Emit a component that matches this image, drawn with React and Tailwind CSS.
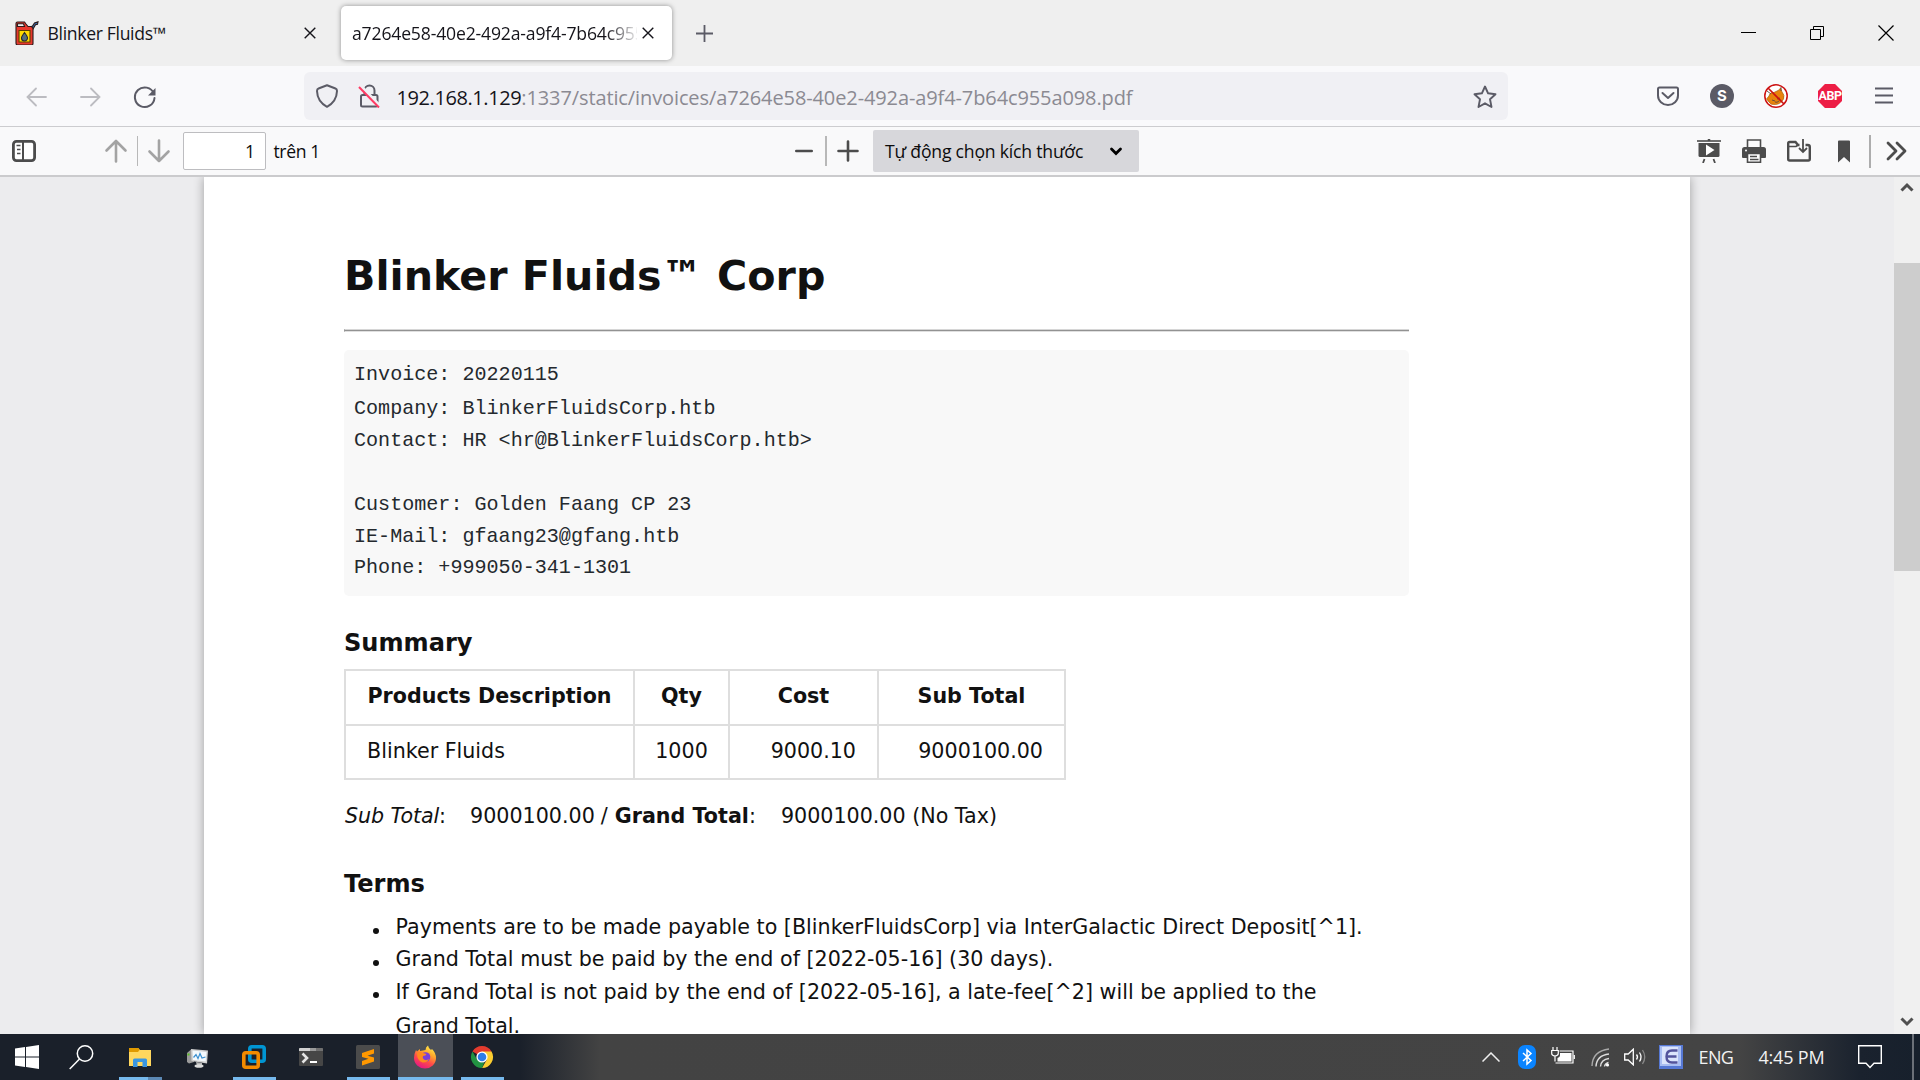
const ink = "#5b5b66";

function Svg({ w = 24, h = 24, className = "", children, sw = 2, stroke = ink, ...rest }) {
  return (
    <svg
      width={w}
      height={h}
      viewBox={`0 0 ${w} ${h}`}
      fill="none"
      stroke={stroke}
      strokeWidth={sw}
      className={`block shrink-0 ${className}`}
      {...rest}
    >
      {children}
    </svg>
  );
}

/* ---------- Tab strip ---------- */

function GasCan() {
  return (
    <Svg className="ml-[15px]" stroke="#2b1a1a" sw={1.1}>
      <path d="M14.500 6.500l3-1.500 2-3 3.500-1.200-.5 2.500-2 .5-2.500 4.200z" fill="#3467a8" />
      <path d="M1 2.500Q1 1 2.500 1h7l1.500 2 2 2.500h3.500l1.500 2v15q0 1.500-1.500 1.500H2.500Q1 24 1 22z" fill="#e8382d" />
      <path d="M2.500 2.800h6l1 2.700h-7z" fill="#efefef" />
      <path d="M4 9.500h11v11.500H4z" fill="#ffdc00" stroke="#5a4200" />
      <path d="M9.500 11.500q3 4 3 5.500a3 3 0 0 1-6 0q0-1.500 3-5.500z" fill="#55707e" stroke="#252a2e" sw={1} />
    </Svg>
  );
}

function TabClose({ className }) {
  return (
    <Svg w={12} h={12} sw={1.4} stroke="#15141a" className={className}>
      <path d="M.7.7l10.600 10.600M11.300.7L.7 11.300" />
    </Svg>
  );
}

function TabStrip() {
  return (
    <div className="flex h-[66px] items-center bg-[#efefef] text-[17.6px] text-[#15141a]">
      <div className="flex w-[341px] items-center">
        <GasCan />
        <span className="ml-[8.500px] w-[256.5px] tracking-[-0.33px] whitespace-nowrap">Blinker Fluids™</span>
        <TabClose />
      </div>
      <div className="flex h-[54px] w-[331px] items-center rounded-[5px] bg-white pl-[11px] shadow-[0_0_5px_rgba(0,0,0,0.4)]">
        <span className="w-[285px] overflow-hidden mask-r-from-89% mask-r-to-101% tracking-[-0.17px] whitespace-nowrap">
          a7264e58-40e2-492a-a9f4-7b64c955
        </span>
        <TabClose className="ml-[5px]" />
      </div>
      <Svg w={18} h={18} className="ml-[23px]" sw={1.8}>
        <path d="M9.500 1v17M1 9.500h17" />
      </Svg>
      <div className="ml-auto flex items-center pr-[26px]">
        <Svg w={15} h={2} sw={1} stroke="#000" className="mr-[54px]">
          <path d="M0 .5h15" />
        </Svg>
        <Svg w={14} h={14} sw={1} stroke="#000" className="mr-[54px]">
          <path d="M.5 3.500h10v10H.5zM3.500 3.500v-3h10v10h-3" />
        </Svg>
        <Svg w={16} h={16} sw={1.2} stroke="#000">
          <path d="M.5.5l15 15M15.500.5l-15 15" />
        </Svg>
      </div>
    </div>
  );
}

/* ---------- Navigation bar ---------- */

function ExtensionIcons() {
  return (
    <>
      <Svg className="ml-[148px]" sw={2}>
        <path d="M3.500 3.500h17q1.500 0 1.500 1.500v6.500a10 9.500 0 0 1-20 0V5q0-1.500 1.500-1.500z" />
        <path d="M6.500 9l5.500 5 5.500-5" strokeLinecap="round" strokeLinejoin="round" />
      </Svg>
      <div className="ml-[30px] flex size-6 items-center justify-center rounded-full bg-[#5b5b66] font-['Inter',sans-serif] text-[15px] font-bold text-white">
        S
      </div>
      <Svg className="ml-[30px]" sw={1}>
        <circle cx="12" cy="12" r="11" fill="#fff" stroke="none" />
        <path d="M5 12q1-4 5-3.500l5-2.500 1.500-2 1.500 4q3 3 1.500 7-2.500 5-8 5.500-5 .5-6.500-2.500l-2.500-3z" fill="#e8830c" stroke="#a8600c" strokeWidth=".7" />
        <path d="M3 7l4 3M17 3v4M8 16l3 1M13 15l3-1M11 18q2 1 4-1" stroke="#5a4a40" strokeWidth=".9" />
        <circle cx="12" cy="12" r="11.200" stroke="#cc1111" strokeWidth="1.500" />
        <path d="M4 4l16 16" stroke="#cc1111" strokeWidth="1.600" />
      </Svg>
      <div className="ml-[30px] flex size-6 items-center justify-center bg-[#ed1e45] font-['Roboto',sans-serif] text-[12.500px] font-bold tracking-[-0.5px] text-white [clip-path:polygon(29%_0,71%_0,100%_29%,100%_71%,71%_100%,29%_100%,0_71%,0_29%)]">
        ABP
      </div>
      <Svg w={18} h={18} className="ml-[33px]" sw={1.8}>
        <path d="M0 1.500h18M0 8.500h18M0 15.500h18" />
      </Svg>
    </>
  );
}

function NavBar() {
  return (
    <div className="flex h-[61px] items-center border-b border-[#cccccf] bg-[#f9f9fb]">
      <Svg w={21} h={20} className="mt-[2px] ml-[25.500px]" sw={1.8} stroke="#bcbcc1" strokeLinecap="round">
        <path d="M10 1.500L1.500 10l8.500 8.500M1.500 10H20" />
      </Svg>
      <Svg w={21} h={20} className="mt-[2px] ml-[33px]" sw={1.8} stroke="#bcbcc1" strokeLinecap="round">
        <path d="M11 1.500l8.500 8.500-8.500 8.500M19.500 10H1" />
      </Svg>
      <Svg w={24} h={24} className="mt-[3px] ml-[32px]" sw={2}>
        <path d="M20.800 7.500A9.800 9.800 0 1 0 21.500 12" strokeLinecap="round" />
        <path d="M22.500 2v7.500h-7.500z" fill={ink} stroke="none" />
      </Svg>
      <div className="ml-[147.500px] flex h-12 w-[1204px] items-center rounded-[6px] bg-[#f0f0f4] pl-[11px]">
        <Svg sw={2} strokeLinejoin="round">
          <path d="M12 1.200l8.500 3.300q1.500.5 1.500 2.500-.3 10.500-10 15.800Q2.300 17.500 2 7q0-2 1.500-2.500z" />
        </Svg>
        <Svg className="ml-[18px]" sw={2}>
          <path d="M7.500 10.500V6.500a5 5 0 0 1 10 0v4" />
          <path d="M8 11H19q1.500 0 1.500 1.500v8.500q0 1.500-1.500 1.500H5.500q-1.500 0-1.500-1.500v-8.500Q4 11 5.500 11z" />
          <path d="M4 2l20 21" stroke="#f0f0f4" strokeWidth="3" />
          <path d="M2 3l20 20.500" stroke="#ff3b63" />
        </Svg>
        <div className="mt-[4px] ml-[15.500px] text-[20px] whitespace-nowrap">
          <span className="tracking-[-0.41px] text-[#15141a]">192.168.1.129</span>
          <span className="tracking-[-0.11px] text-[#8b8a92]">
            :1337/static/invoices/a7264e58-40e2-492a-a9f4-7b64c955a098.pdf
          </span>
        </div>
        <Svg className="mt-px mr-[11px] ml-auto" sw={1.9} strokeLinejoin="round">
          <path d="M12 1.500l3.100 6.800 7.400.9-5.500 5 1.500 7.800-6.500-3.700L5.500 22 7 14.200l-5.500-5 7.400-.9z" />
        </Svg>
      </div>
      <ExtensionIcons />
    </div>
  );
}

/* ---------- PDF viewer toolbar ---------- */

const dark = "#4c4c4c";

function PdfToolbar() {
  return (
    <div className="flex h-[50px] items-center border-b-2 border-[#cbcbcd] bg-[#f9f9fa] text-[17.6px] text-[#0c0c0d]">
      <Svg className="ml-3" stroke={dark} sw={2.8}>
        <rect x="1.400" y="2.400" width="21.200" height="19.200" rx="3" fill="#fff" />
        <path d="M11 2v20" strokeWidth="2" />
        <path d="M4.500 6.500h4M5 10.500h3.500M5 14.500h3.500" strokeWidth="1.500" />
      </Svg>
      <Svg className="ml-[68px]" stroke="#a3a3a3" sw={2.6} strokeLinecap="round" strokeLinejoin="round">
        <path d="M12 22.500V2M2.500 11.500L12 2l9.500 9.500" />
      </Svg>
      <div className="ml-[9px] h-[30px] w-px bg-[#b8b8b8]" />
      <Svg className="ml-[9px]" stroke="#a3a3a3" sw={2.6} strokeLinecap="round" strokeLinejoin="round">
        <path d="M12 1.500V22M2.500 12.500L12 22l9.500-9.500" />
      </Svg>
      <div className="ml-3 flex h-[38px] w-[83px] items-center justify-end rounded-[2px] border border-[#bdbdc0] bg-white pr-[10px]">
        1
      </div>
      <span className="ml-[7.500px] w-[521.5px] tracking-[-0.4px] whitespace-nowrap">trên 1</span>
      <Svg w={18} h={4} stroke={dark} sw={2.6} strokeLinecap="round">
        <path d="M1.300 2h15.400" />
      </Svg>
      <div className="ml-3 h-[30px] w-[2px] bg-[#b8b8b8]" />
      <Svg w={22} h={22} className="ml-[10px]" stroke={dark} sw={2.6} strokeLinecap="round">
        <path d="M11 1.500v19M1.500 11h19" />
      </Svg>
      <div className="ml-[14px] flex h-[42px] w-[266px] items-center rounded-[2px] bg-[#d7d7db] pr-[16px] pl-[12px]">
        <span className="tracking-[-0.2px] whitespace-nowrap">Tự động chọn kích thước</span>
        <Svg w={14} h={10} className="ml-auto" stroke="#000" sw={2.8} strokeLinecap="round">
          <path d="M2.500 3L7 7.500 11.500 3" />
        </Svg>
      </div>
      <div className="ml-auto flex items-center pr-[13px]">
        <Svg stroke={dark} sw={1.4}>
          <path d="M0 2h24" strokeWidth="1.600" />
          <path d="M12 0v2" strokeWidth="2.500" />
          <path d="M1.500 4h21v12.500q0 1.500-1.500 1.500H3q-1.500 0-1.500-1.500z" fill={dark} stroke="none" />
          <path d="M9 5.500l8.500 5.500L9 16.500z" fill="#fff" stroke="none" />
          <path d="M7.500 20l-1.500 4M16.500 20l1.500 4" strokeWidth="1.800" />
        </Svg>
        <Svg className="ml-[21px]" stroke={dark} sw={1.6}>
          <path d="M5.500 8V1h13v7" />
          <path d="M2.500 8h19q2.500 0 2.500 2.500V18q0 1-1 1H1q-1 0-1-1v-7.500Q0 8 2.500 8z" fill={dark} stroke="none" />
          <path d="M5.500 14.500h13v8.700h-13z" fill="#fff" />
          <path d="M8 17.500h7M8 20.500h8.500" />
          <circle cx="4" cy="11.500" r="1" fill="#fff" stroke="none" />
        </Svg>
        <Svg className="ml-[21px]" stroke={dark} sw={2.4}>
          <path d="M12.500 6H11L8.500 3H2.500Q1.200 3 1.200 4.500v15.500q0 1.500 1.500 1.500h18.600q1.500 0 1.500-1.500V8q0-2-2-2H18.500" />
          <path d="M1 7.500h8l2-1.500" strokeWidth="1.600" />
          <path d="M16 0v12.500M12 9l4 4 4-4" strokeWidth="1.800" />
        </Svg>
        <Svg w={12} h={24} className="ml-[27px]" stroke="none">
          <path d="M0 2.500Q0 1.500 1 1.500h10q1 0 1 1v21l-6-5.500-6 5.500z" fill={dark} />
        </Svg>
        <div className="ml-[19px] h-[33px] w-[2px] bg-[#adadad]" />
        <Svg w={21} h={20} className="ml-[15px]" stroke={dark} sw={2.8} strokeLinecap="round" strokeLinejoin="round">
          <path d="M2 2l8 8-8 8M11 2l8 8-8 8" />
        </Svg>
      </div>
    </div>
  );
}

/* ---------- Invoice ---------- */

function Bullet() {
  return <span className="mt-[17px] mr-[17px] size-[6px] shrink-0 rounded-full bg-[#111]" />;
}

function Invoice() {
  return (
    <div className="ml-[204px] h-[857px] w-[1486px] shrink-0 overflow-hidden bg-white pl-[140px] font-['DejaVu_Sans',sans-serif] text-[20.65px] text-[#111] shadow-[0_0_10px_rgba(0,0,0,0.33)]">
      <h1 className="mt-[79px] h-10 text-[41.2px] leading-10 font-bold whitespace-nowrap">Blinker Fluids™ Corp</h1>
      <div className="mt-[33px] h-[3px] w-[1065px] border-t border-b border-l border-t-[#d6d6d6] border-b-[#e0e0e0] border-l-[#999] bg-[#929292]" />
      <div className="mt-[18px] h-[246px] w-[1065px] rounded-[5px] bg-[#f8f8f8] pt-[8px] pl-[10px] font-['Liberation_Mono',monospace] text-[20.08px] text-[#24292e]">
        <div className="h-[34px] leading-[34px]">Invoice: 20220115</div>
        <div className="h-[33px] leading-[33px]">Company: BlinkerFluidsCorp.htb</div>
        <div className="h-[32px] leading-[32px]">Contact: HR &lt;hr@BlinkerFluidsCorp.htb&gt;</div>
        <div className="h-[32px]" />
        <div className="h-[32px] leading-[32px]">Customer: Golden Faang CP 23</div>
        <div className="h-[31px] leading-[32px]">IE-Mail: gfaang23@gfang.htb</div>
        <div className="h-[31px] leading-[31px]">Phone: +999050-341-1301</div>
      </div>
      <h2 className="mt-[30px] h-8 pt-px text-[24.1px] leading-8 font-bold">Summary</h2>
      <table className="mt-[11px] w-[721px] table-fixed border-collapse border-2 border-[#dedede] [&_td]:border-2 [&_td]:border-[#dedede] [&_th]:border-2 [&_th]:border-[#dedede]">
        <colgroup>
          <col className="w-[289px]" />
          <col className="w-[95px]" />
          <col className="w-[149px]" />
          <col className="w-[187px]" />
        </colgroup>
        <tbody>
          <tr className="h-[55px] leading-[50px]">
            <th className="p-0 pb-[3px]">Products Description</th>
            <th className="p-0 pb-[3px]">Qty</th>
            <th className="p-0 pb-[3px]">Cost</th>
            <th className="p-0 pb-[3px]">Sub Total</th>
          </tr>
          <tr className="h-[54px] leading-[50px]">
            <td className="p-0 pb-[2px] pl-[21px]">Blinker Fluids</td>
            <td className="p-0 pb-[2px] text-center">1000</td>
            <td className="p-0 pr-[21px] pb-[2px] text-right">9000.10</td>
            <td className="p-0 pr-[21px] pb-[2px] text-right">9000100.00</td>
          </tr>
        </tbody>
      </table>
      <div className="mt-[20px] ml-px flex h-8 items-center whitespace-nowrap">
        <em className="tracking-[-0.1px]">Sub Total</em>:<span className="mr-[6px] ml-[24px]">9000100.00</span>/
        <strong className="ml-[7px]">Grand Total</strong>:<span className="ml-[25px]">9000100.00 (No Tax)</span>
      </div>
      <h2 className="mt-[36px] h-8 text-[24.1px] leading-8 font-bold">Terms</h2>
      <ul className="mt-[11px] pl-[28.500px] leading-8 whitespace-nowrap">
        <li className="flex h-8">
          <Bullet />
          Payments are to be made payable to [BlinkerFluidsCorp] via InterGalactic Direct Deposit[^1].
        </li>
        <li className="flex h-8">
          <Bullet />
          Grand Total must be paid by the end of [2022-05-16] (30 days).
        </li>
        <li className="flex leading-[34px]">
          <Bullet />
          <span>
            If Grand Total is not paid by the end of [2022-05-16], a late-fee[^2] will be applied to the
            <br />
            Grand Total.
          </span>
        </li>
      </ul>
    </div>
  );
}

function ScrollBar() {
  return (
    <div className="ml-auto flex w-[26px] flex-col items-center bg-[#f0f0f0]">
      <Svg w={14} h={10} className="mt-[5px]" stroke="#505050" sw={3}>
        <path d="M1.500 8.500L7 3l5.500 5.500" />
      </Svg>
      <div className="mt-[71px] h-[308px] w-full bg-[#cdcdcd]" />
      <Svg w={14} h={10} className="mt-auto mb-[7px]" stroke="#505050" sw={3}>
        <path d="M1.500 1.500L7 7l5.500-5.500" />
      </Svg>
    </div>
  );
}

/* ---------- Taskbar ---------- */

function TaskButton({ children, bar = "", active = false, split = false }) {
  return (
    <div className="flex w-[57px] shrink-0 flex-col items-center">
      <div className={`flex h-[43px] w-[55px] items-center justify-center pt-[3px] ${active ? "bg-[#4b4f57]" : ""}`}>
        {children}
      </div>
      <div className={`flex h-[3px] justify-end ${bar}`}>{split && <div className="h-full w-[14px] bg-[#5c89b5]" />}</div>
    </div>
  );
}

function AppIcons() {
  const bar = "w-[43px] bg-[#76b9ed]";
  return (
    <div className="flex">
      <TaskButton bar={bar} split>
        <Svg stroke="none">
          <path d="M1 3h9l2 2h11v16H1z" fill="#ffd75e" />
          <path d="M1 3h9.500l1 2-1.500 2H1z" fill="#e09a00" />
          <path d="M5 22v-7q0-1.500 1.500-1.500h11q1.500 0 1.500 1.500v7h-4.500v-5h-5v5z" fill="#3a96e0" />
        </Svg>
      </TaskButton>
      <TaskButton>
        <Svg stroke="none">
          <path d="M2 8l4-3.500 3 .5v12l-5 1.500-2-1.500z" fill="#9b9b9b" />
          <path d="M6 4l17 1.500-1 13L6.500 16z" fill="#cfcfcf" />
          <path d="M7.500 5.500l14 1.500-.8 9.500L8 15z" fill="#f4f9fd" />
          <path d="M8.500 12.500l2.500-3 2 4 2-5 2 4.500 3.500-1" stroke="#3a8fd0" strokeWidth="1.200" />
          <path d="M11 17l6 1v3h-5z" fill="#b5b5b5" />
          <ellipse cx="14" cy="21" rx="4.500" ry="1.800" fill="#dcdcdc" />
          <path d="M2.500 8.500h2v2h-2z" fill="#58c322" />
        </Svg>
      </TaskButton>
      <TaskButton bar={bar}>
        <Svg sw={3.6}>
          <rect x="7.800" y="1.800" width="14.400" height="14.400" rx="2" stroke="#0095d3" />
          <rect x="1.800" y="7.800" width="14.400" height="14.400" rx="2" stroke="#f38b00" />
          <path d="M7.800 9v5q0 2 2 2h5" stroke="#0095d3" strokeWidth="0" />
        </Svg>
      </TaskButton>
      <TaskButton>
        <Svg stroke="none">
          <rect y="3" width="24" height="18" rx="1" fill="#464646" />
          <path d="M0 3.800Q0 3 1 3h10v3H0z" fill="#d0d0d0" />
          <path d="M11 3h6v3h-6z" fill="#9a9a9a" />
          <path d="M17 3h6q1 0 1 1v2h-7z" fill="#707070" />
          <path d="M3.500 8.500l4.500 4.500-4.500 4.500" stroke="#e4e4e4" strokeWidth="2.600" />
          <path d="M11 17h7" stroke="#fff" strokeWidth="2" />
        </Svg>
      </TaskButton>
      <TaskButton bar={bar}>
        <Svg stroke="none">
          <rect width="24" height="24" rx="1.500" fill="#4b4b4b" />
          <path d="M6 8l12-4v4.500l-6.500 2.200L18 12.500v4L6 20.500V16l6.500-2.200L6 12z" fill="#ff9800" />
        </Svg>
      </TaskButton>
      <TaskButton active bar="w-[55px] bg-[#76b9ed]">
        <Svg stroke="none">
          <defs>
            <linearGradient id="flame" x1="0.800" y1="0" x2="0.300" y2="1">
              <stop offset="0" stopColor="#fff44f" />
              <stop offset="0.350" stopColor="#ffa62b" />
              <stop offset="0.650" stopColor="#ff4a4a" />
              <stop offset="1" stopColor="#e31587" />
            </linearGradient>
          </defs>
          <path d="M3 5l1 1.500L7 4v2l3-.5L12.500 5q0-3 2.500-4.500.5 3 3 4.500l1-1q4 4 4 9a11 10.500 0 0 1-22 0q0-4 2-8z" fill="url(#flame)" />
          <circle cx="12.500" cy="12" r="4.800" fill="#7a3fd8" />
          <path d="M4 8q3-2 6 0l3.500 1q-.5 2-3.500 2-1 2 1 3.500 2.500 1.500 5-.5-2 4-6.500 3.500Q4 16 4 8z" fill="#ff8a1e" />
        </Svg>
      </TaskButton>
      <TaskButton bar={bar}>
        <Svg stroke="none">
          <path d="M12 12L2.470 6.500A11 11 0 0 1 21.530 6.500z" fill="#e33b2e" />
          <path d="M12 6.500h9.530A11 11 0 0 1 12 23l4.760-8.250z" fill="#fccd30" />
          <path d="M2.470 6.500l4.770 8.250L12 17.500l2.500-.5L12 23A11 11 0 0 1 2.470 6.500z" fill="#229342" />
          <circle cx="12" cy="12" r="5.600" fill="#fff" />
          <circle cx="12" cy="12" r="4.300" fill="#2f7de9" />
        </Svg>
      </TaskButton>
    </div>
  );
}

function Tray() {
  return (
    <div className="ml-auto flex items-center text-[18px] text-[#f2f2f2]">
      <Svg w={18} h={10} stroke="#eee" sw={1.5}>
        <path d="M.5 9.500L9 1l8.500 8.500" />
      </Svg>
      <Svg w={18} h={24} className="ml-[18px]" stroke="#fff" sw={1.5}>
        <rect width="18" height="24" rx="7" fill="#0a84ff" stroke="none" />
        <path d="M5 8l8 7.500-4 3.500V5l4 3.500L5 16" />
      </Svg>
      <Svg w={24} h={18} className="mb-[2px] ml-[15px]" stroke="#fff" sw={1.2}>
        <path d="M2 0v3M6 0v3M.7 3.500h6.600v3q0 2-3.300 2.500-3.300-.5-3.300-2.500zM4 9v5.500" />
        <path d="M8.500 4h13.500v12H4.500" />
        <path d="M9 6h11.500v8.500H6.500V11q2.500-1 2.500-2.500z" fill="#fff" stroke="none" />
        <path d="M23.300 8v4" />
      </Svg>
      <Svg w={19} h={19} className="ml-[16px]" stroke="#ddd" sw={1.4}>
        <path d="M1 18Q1.500 3 18 1" stroke="#aaa" />
        <path d="M5 18.500Q5.500 7.500 18 6M9.500 18.500q.5-7 8.500-8" />
        <path d="M13.500 18.500q.5-3 4-4" />
        <circle cx="16.500" cy="17" r="1.600" fill="#fff" stroke="none" />
      </Svg>
      <Svg w={23} h={18} className="ml-[14px]" stroke="#fff" sw={1.3}>
        <path d="M.7 6h3.500L9.300 1.200v15.600L4.200 12H.7z" />
        <path d="M12.500 6.500q2 2.500 0 5M15.500 4.500q3 4.500 0 9" />
        <path d="M18.500 2q4.500 7 0 14" stroke="#888" />
      </Svg>
      <Svg className="ml-[12px]" stroke="none">
        <rect width="24" height="24" fill="#5678d4" />
        <path d="M1 1h21v20H1z" fill="#a9bdf2" />
        <path d="M3 2h16v17H3z" fill="#dbe4fc" />
        <path d="M18.500 5.500H13q-5.500 0-5.500 6t5.500 6h5.500M7 11.500h10.500" stroke="#53539c" strokeWidth="2.400" />
      </Svg>
      <span className="ml-[15.500px] w-[60px] tracking-[-0.6px]">ENG</span>
      <span className="w-[99.5px] tracking-[-0.2px] whitespace-nowrap">4:45 PM</span>
      <Svg w={24} h={24} stroke="#fff" sw={1.4}>
        <path d="M.7.700h22.600v17.600H16L12 22.500 8 18.300H.7z" />
      </Svg>
      <div className="mr-[6px] ml-[30px] h-[46px] w-[2px] bg-[#6b7078]" />
    </div>
  );
}

function Taskbar() {
  return (
    <div className="flex h-[46px] bg-[linear-gradient(90deg,#1a202a_0,#1a202a_520px,#434343_600px,#444_1740px,#1a222e_1860px,#17202c_1920px)]">
      <Svg className="mt-[11px] ml-[15px]" stroke="none">
        <path d="M0 3.500l10-1.400v9.400H0zM11 2l13-2v11.500H11zM0 12.500h10v9.400L0 20.500zM11 12.500h13V24l-13-1.900z" fill="#fff" />
      </Svg>
      <Svg w={25} h={25} className="mt-[11px] mr-[18px] ml-[29.500px]" stroke="#fff" sw={1.5}>
        <circle cx="16" cy="8.500" r="7.700" />
        <path d="M10.500 14L.7 24" />
      </Svg>
      <AppIcons />
      <Tray />
    </div>
  );
}

export default function App() {
  return (
    <div className="flex h-[1080px] w-[1920px] flex-col overflow-hidden font-['Open_Sans',sans-serif]">
      <TabStrip />
      <NavBar />
      <PdfToolbar />
      <div className="flex h-[857px] overflow-hidden bg-[#ececee]">
        <Invoice />
        <ScrollBar />
      </div>
      <Taskbar />
    </div>
  );
}
